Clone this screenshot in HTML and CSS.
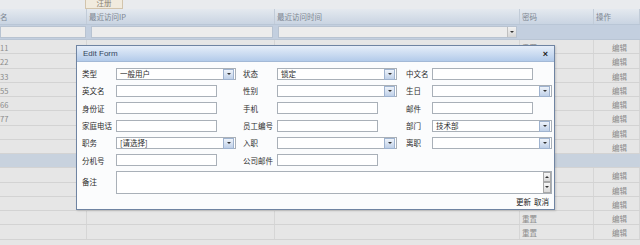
FILE: index.html
```html
<!DOCTYPE html>
<html lang="zh-CN">
<head>
    <meta charset="UTF-8">
    <title>用户管理</title>
    <link rel="stylesheet" href="styles.css">
</head>
<body>
    <div class="page">
        <div class="toolbar"><span class="tb-btn">注册</span></div>
        <div class="grid">
            <div class="row head">
                <div>名</div><div>最近访问IP</div><div>最近访问时间</div><div>密码</div><div>操作</div>
            </div>
            <div class="row filter">
                <div><div class="fbox f1"></div></div>
                <div><div class="fbox f2"></div></div>
                <div><div class="fbox f3"><span class="dd"></span></div></div>
                <div></div>
                <div></div>
            </div>
            <div class="row"><div>11</div><div>192.168.72.80</div><div>2006-6-28 17:02:17</div><div>重置</div><div class="op">编辑</div></div>
            <div class="row"><div>22</div><div></div><div></div><div>重置</div><div class="op">编辑</div></div>
            <div class="row"><div>33</div><div></div><div></div><div>重置</div><div class="op">编辑</div></div>
            <div class="row"><div>55</div><div></div><div></div><div>重置</div><div class="op">编辑</div></div>
            <div class="row"><div>66</div><div></div><div></div><div>重置</div><div class="op">编辑</div></div>
            <div class="row"><div>77</div><div></div><div></div><div>重置</div><div class="op">编辑</div></div>
            <div class="row"><div></div><div></div><div></div><div>重置</div><div class="op">编辑</div></div>
            <div class="row"><div></div><div></div><div></div><div>重置</div><div class="op">编辑</div></div>
            <div class="row sel"><div></div><div></div><div></div><div></div><div></div></div>
            <div class="row"><div></div><div></div><div></div><div>重置</div><div class="op">编辑</div></div>
            <div class="row"><div></div><div></div><div></div><div>重置</div><div class="op">编辑</div></div>
            <div class="row"><div></div><div></div><div></div><div>重置</div><div class="op">编辑</div></div>
            <div class="row"><div></div><div></div><div></div><div>重置</div><div class="op">编辑</div></div>
            <div class="row"><div></div><div></div><div></div><div>重置</div><div class="op">编辑</div></div>
        </div>

        <div class="modal">
            <div class="modal-title">
                <span>Edit Form</span>
                <span class="close">×</span>
            </div>
            <div class="modal-body">
                <div class="form-grid">
                    <label>类型</label>
                    <div class="sel-box"><span>一般用户</span><i class="dd"></i></div>
                    <label>状态</label>
                    <div class="sel-box"><span>锁定</span><i class="dd"></i></div>
                    <label>中文名</label>
                    <div><input class="txt" type="text"></div>

                    <label>英文名</label>
                    <div><input class="txt" type="text"></div>
                    <label>性别</label>
                    <div class="sel-box"><span></span><i class="dd"></i></div>
                    <label>生日</label>
                    <div class="sel-box"><span></span><i class="dd"></i></div>

                    <label>身份证</label>
                    <div><input class="txt" type="text"></div>
                    <label>手机</label>
                    <div><input class="txt" type="text"></div>
                    <label>邮件</label>
                    <div><input class="txt" type="text"></div>

                    <label>家庭电话</label>
                    <div><input class="txt" type="text"></div>
                    <label>员工编号</label>
                    <div><input class="txt" type="text"></div>
                    <label>部门</label>
                    <div class="sel-box"><span>技术部</span><i class="dd"></i></div>

                    <label>职务</label>
                    <div class="sel-box"><span>[请选择]</span><i class="dd"></i></div>
                    <label>入职</label>
                    <div class="sel-box"><span></span><i class="dd"></i></div>
                    <label>离职</label>
                    <div class="sel-box"><span></span><i class="dd"></i></div>

                    <label>分机号</label>
                    <div><input class="txt" type="text"></div>
                    <label>公司邮件</label>
                    <div><input class="txt" type="text"></div>
                    <label></label>
                    <div></div>

                    <label>备注</label>
                    <div class="memo">
                        <div class="scroll">
                            <i class="arr up"></i>
                            <i class="arr down"></i>
                        </div>
                    </div>
                </div>
                <div class="actions">
                    <a href="#">更新</a>
                    <a href="#">取消</a>
                </div>
            </div>
        </div>
    </div>
</body>
</html>
```

FILE: styles.css
```css
body {
    margin: 0;
    background-color: #e6e6e6;
    font-family: "Noto Sans CJK SC", "DejaVu Sans", sans-serif;
    font-size: 7.5px;
    color: #8a8a8a;
}
.page {
    position: relative;
    width: 640px;
    height: 245px;
    overflow: hidden;
}
.toolbar {
    height: 9px;
    background-color: #e9ebee;
    padding-left: 85px;
}
.tb-btn {
    display: block;
    box-sizing: border-box;
    width: 38px;
    height: 9px;
    line-height: 6px;
    overflow: hidden;
    text-align: center;
    background-color: #f1ebde;
    border: 1px solid #d2c4ac;
    border-top: none;
    color: #8a8070;
}

/* grid */
.row {
    display: grid;
    grid-template-columns: 87px 188px 245px 74px 46px;
    box-sizing: border-box;
    height: 14.25px;
    border-bottom: 1px solid #d3d3d3;
    line-height: 12px;
}
.row > div {
    padding: 2px 2px 0;
    white-space: nowrap;
    overflow: hidden;
    border-right: 1px solid #d6d6d6;
}
.row > div:first-child {
    padding-left: 0;
}
.row > .op {
    text-align: right;
    padding-right: 12px;
}
.row.head {
    height: 16px;
    background: linear-gradient(#e4e9ef, #c9d4e2);
    border-bottom: 1px solid #b9c6d6;
    color: #7c8590;
}
.row.head > div {
    border-right-color: #c2ccd8;
}
.row.filter {
    height: 15px;
    background-color: #c3cfdf;
    border-bottom: 1px solid #b9c5d4;
}
.row.filter > div {
    padding: 0;
    border-right: none;
}
.fbox {
    position: relative;
    height: 10px;
    margin-top: 1px;
    background-color: #ececec;
    border: 1px solid #b8c3d1;
}
.f1 { margin-right: 1px; }
.f2 { margin-left: 4px; margin-right: 2px; }
.f3 { margin-left: 3px; margin-right: 3px; }
.fbox .dd {
    position: absolute;
    right: 0;
    top: 0;
    width: 8px;
    height: 10px;
    background: linear-gradient(#f2f2f2, #d6d6d6);
    border-left: 1px solid #c0c0c0;
}
.fbox .dd::after,
.sel-box .dd::after {
    content: "";
    position: absolute;
    left: 50%;
    top: 50%;
    margin: -1px 0 0 -2px;
    border-left: 2px solid transparent;
    border-right: 2px solid transparent;
    border-top: 2px solid #333;
}
.row.sel {
    background-color: #c8d2de;
}
.row.sel > div {
    border-right-color: #c8d2de;
}

/* dialog */
.modal {
    position: absolute;
    left: 76px;
    top: 45px;
    width: 477px;
    height: 163px;
    background-color: #fbfcfd;
    border: 1px solid #6f84a2;
    box-shadow: 1px 1px 2px rgba(0, 0, 0, 0.15);
}
.modal-title {
    display: flex;
    justify-content: space-between;
    align-items: center;
    height: 15px;
    padding: 0 6px;
    background: linear-gradient(#e6eef9, #b3cbea);
    border-bottom: 1px solid #a3b9d6;
    font-family: "Liberation Sans", "DejaVu Sans", sans-serif;
    font-size: 8px;
    color: #34455c;
}
.close {
    font-weight: bold;
    font-size: 9px;
    color: #222;
}
.modal-body {
    padding: 3px 3px 0 5px;
    color: #2c2c2c;
}
.form-grid {
    display: grid;
    grid-template-columns: 34px 127px 34px 129px 26px 120px;
    grid-template-rows: repeat(6, 17.3px) 25px;
    align-items: center;
}
.form-grid label {
    white-space: nowrap;
}
.txt {
    display: block;
    box-sizing: border-box;
    width: 101px;
    height: 12px;
    margin: 0;
    padding: 0;
    background-color: #fff;
    border: 1px solid #a9b0b8;
    outline: none;
}
.sel-box {
    position: relative;
    box-sizing: border-box;
    width: 120px;
    height: 12px;
    padding-left: 3px;
    background-color: #fff;
    border: 1px solid #a9b0b8;
    line-height: 10px;
}
.sel-box .dd {
    position: absolute;
    right: 1px;
    top: 0;
    width: 9px;
    height: 9px;
    background: linear-gradient(#eef3fa, #bfd0e8);
    border: 1px solid #9fb3cf;
}
.memo {
    position: relative;
    grid-column: 2 / 7;
    align-self: start;
    box-sizing: border-box;
    height: 23px;
    margin-top: 2px;
    background-color: #fff;
    border: 1px solid #a9b0b8;
}
.scroll {
    position: absolute;
    right: 0;
    top: 0;
    bottom: 0;
    width: 8px;
    display: flex;
    flex-direction: column;
    background-color: #f0f0f0;
}
.arr {
    position: relative;
    flex: 1;
    background: linear-gradient(#f7f7f7, #d9d9d9);
    border: 1px solid #a8a8a8;
}
.arr::after {
    content: "";
    position: absolute;
    left: 1px;
    top: 3px;
    border-left: 2px solid transparent;
    border-right: 2px solid transparent;
}
.arr.up::after { border-bottom: 2px solid #333; }
.arr.down::after { border-top: 2px solid #333; }
.actions {
    display: flex;
    justify-content: flex-end;
    gap: 3px;
    margin-top: 2px;
    padding-right: 2px;
}
.actions a {
    color: #222;
    text-decoration: none;
}
```
